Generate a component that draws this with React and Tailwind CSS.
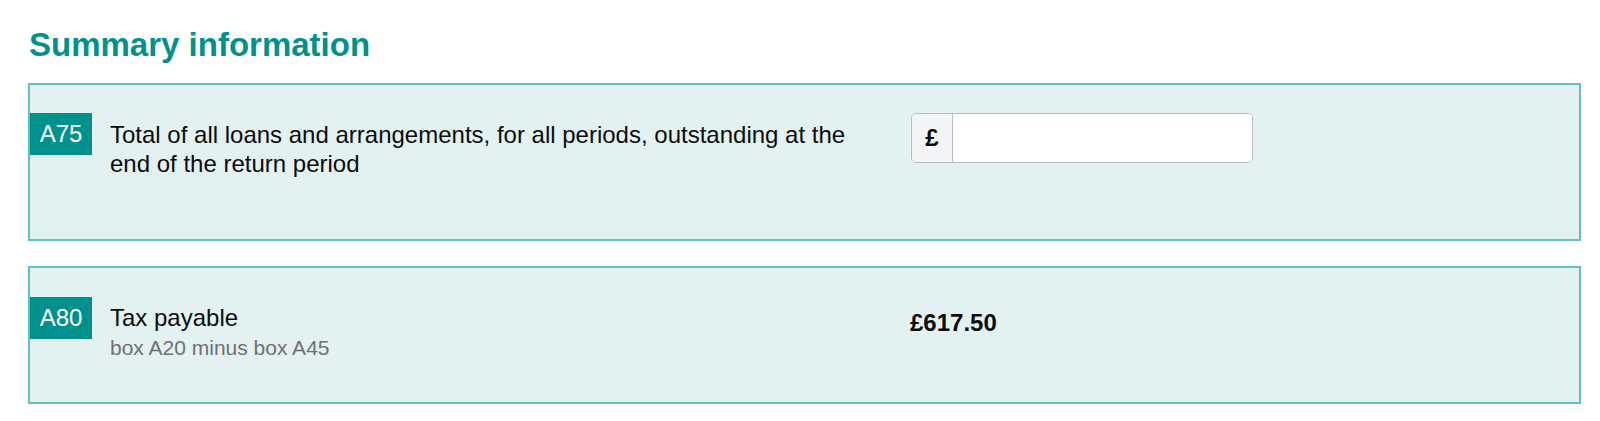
import React from 'react'

const font = { fontFamily: '"Liberation Sans", Arial, sans-serif' }

function Badge({ code }) {
  return (
    <div className="w-[62px] h-[42px] shrink-0 bg-[#00918c] text-white text-[24px] leading-[42px] text-center">
      {code}
    </div>
  )
}

function MoneyInput() {
  return (
    <div className="flex w-[342px] h-[50px] border border-[#b6bcc1] rounded-[5px] bg-white overflow-hidden">
      <div className="w-[41px] shrink-0 bg-[#f3f4f6] border-r border-[#b6bcc1] flex items-center justify-center text-[24px] font-bold text-[#0b0c0c]">
        £
      </div>
      <input className="flex-1 min-w-0 px-3 text-[24px] outline-none bg-white" />
    </div>
  )
}

export default function App() {
  return (
    <div className="bg-white min-h-[421px] pl-[28px] pr-[19px] pt-[25px]" style={font}>
      <h2 className="text-[33px] leading-[40px] font-bold text-[#00918c] mb-[18px] ml-[1px]">
        Summary information
      </h2>

      <div className="flex flex-col gap-[25px]">
        <section className="h-[158px] border-2 border-[#62c0c0] bg-[#e3f1f1] pt-[28px]">
          <div className="flex items-start">
            <Badge code="A75" />
            <p className="w-[770px] ml-[18px] pt-[7px] text-[24px] leading-[29px] text-[#0b0c0c]">
              Total of all loans and arrangements, for all periods, outstanding at the end of the return period
            </p>
            <div className="ml-[31px]">
              <MoneyInput />
            </div>
          </div>
        </section>

        <section className="h-[138px] border-2 border-[#62c0c0] bg-[#e3f1f1] pt-[29px]">
          <div className="flex items-start">
            <Badge code="A80" />
            <div className="w-[770px] ml-[18px] pt-[6px]">
              <p className="text-[24px] leading-[29px] text-[#0b0c0c]">Tax payable</p>
              <p className="mt-[2px] text-[21px] leading-[28px] text-[#707070]">box A20 minus box A45</p>
            </div>
            <div className="ml-[30px] pt-[11px] text-[24px] leading-[29px] font-bold text-[#0b0c0c]">
              £617.50
            </div>
          </div>
        </section>
      </div>
    </div>
  )
}
